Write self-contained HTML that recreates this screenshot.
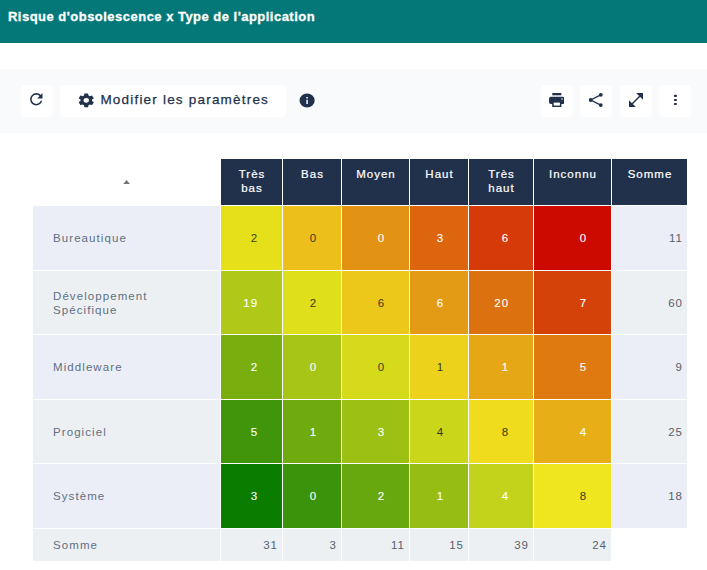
<!DOCTYPE html>
<html lang="fr"><head><meta charset="utf-8"><title>Risque d'obsolescence x Type de l'application</title>
<style>
html,body{margin:0;padding:0;background:#fff}
body{width:707px;height:570px;position:relative;overflow:hidden;font-family:"Liberation Sans",sans-serif;color:#22314b}
.top{position:absolute;left:0;top:0;width:707px;height:43px;background:#047878}
.title{-webkit-text-stroke:0.3px #fff;position:absolute;left:8px;top:9px;line-height:16px;font-size:13px;font-weight:bold;color:#fff;white-space:nowrap;letter-spacing:0.48px}
.bar{position:absolute;left:-1px;top:69px;width:720px;height:63.7px;background:#f9fafb;border-radius:4px 0 0 4px}
.btn{position:absolute;top:85px;height:32px;width:32px;background:#fff;border-radius:4px}
.btn svg{position:absolute;fill:#22314b}
.mod{-webkit-text-stroke:0.25px #22314b;position:absolute;left:100.4px;top:92px;line-height:16px;font-size:13.5px;letter-spacing:1.2px;white-space:nowrap;color:#22314b}
.c{position:absolute;box-sizing:border-box;font-size:11.5px;line-height:14px;white-space:nowrap}
.c span{position:absolute}
.h{color:#fff;text-align:center;letter-spacing:1px;font-size:11.5px;-webkit-text-stroke:0.2px #fff}
.h span{left:1px;right:0;top:8px}
.l{color:#5f6f82;letter-spacing:1.08px}
.l span{left:20px;top:25px}
.l.two span{top:18px}
.v{color:#fff;text-align:right;letter-spacing:1.1px;-webkit-text-stroke:0.1px #fff}
.v.d{color:#3a3a20;-webkit-text-stroke:0}
.v span{right:23.7px;top:25px}
.s{color:#56606b;text-align:right;letter-spacing:1px}
.s span{right:4px;top:25px}
.b span{top:9px}
.tri{position:absolute;left:123px;top:180px;width:0;height:0;border-left:3.5px solid transparent;border-right:3.5px solid transparent;border-bottom:4px solid #777}
</style></head><body>
<div class="top"></div>
<div class="title">Risque d'obsolescence x Type de l'application</div>
<div class="bar"></div>
<div class="btn" style="left:21px"><svg viewBox="0 0 24 24" width="18.6" height="18.6" style="left:6.3px;top:5.2px"><path d="M17.65,6.35C16.2,4.9 14.21,4 12,4A8,8 0 0,0 4,12A8,8 0 0,0 12,20C15.73,20 18.84,17.45 19.73,14H17.65C16.83,16.33 14.61,18 12,18A6,6 0 0,1 6,12A6,6 0 0,1 12,6C13.66,6 15.14,6.69 16.22,7.78L13,11H20V4L17.65,6.35Z"/></svg></div>
<div class="btn" style="left:60px;width:226px"><svg viewBox="0 0 24 24" preserveAspectRatio="none" width="18.5" height="16.6" style="left:17.15px;top:6.7px"><path d="M12,15.5A3.5,3.5 0 0,1 8.5,12A3.5,3.5 0 0,1 12,8.5A3.5,3.5 0 0,1 15.5,12A3.5,3.5 0 0,1 12,15.5M19.43,12.97C19.47,12.65 19.5,12.33 19.5,12C19.5,11.67 19.47,11.34 19.43,11L21.54,9.37C21.73,9.22 21.78,8.95 21.66,8.73L19.66,5.27C19.54,5.05 19.27,4.96 19.05,5.05L16.56,6.05C16.04,5.66 15.5,5.32 14.87,5.07L14.5,2.42C14.46,2.18 14.25,2 14,2H10C9.75,2 9.54,2.18 9.5,2.42L9.13,5.07C8.5,5.32 7.96,5.66 7.44,6.05L4.95,5.05C4.73,4.96 4.46,5.05 4.34,5.27L2.34,8.73C2.21,8.95 2.27,9.22 2.46,9.37L4.57,11C4.53,11.34 4.5,11.67 4.5,12C4.5,12.33 4.53,12.65 4.57,12.97L2.46,14.63C2.27,14.78 2.21,15.05 2.34,15.27L4.34,18.73C4.46,18.95 4.73,19.03 4.95,18.95L7.44,17.94C7.96,18.34 8.5,18.68 9.13,18.93L9.5,21.58C9.54,21.82 9.75,22 10,22H14C14.25,22 14.46,21.82 14.5,21.58L14.87,18.93C15.5,18.67 16.04,18.34 16.56,17.94L19.05,18.95C19.27,19.03 19.54,18.95 19.66,18.73L21.66,15.27C21.78,15.05 21.73,14.78 21.54,14.63L19.43,12.97Z"/></svg></div>
<div class="mod">Modifier les paramètres</div>
<svg viewBox="0 0 24 24" preserveAspectRatio="none" width="18.2" height="17" style="position:absolute;left:297.9px;top:92.1px;fill:#22314b"><path d="M13,9H11V7H13M13,17H11V11H13M12,2A10,10 0 0,0 2,12A10,10 0 0,0 12,22A10,10 0 0,0 22,12A10,10 0 0,0 12,2Z"/></svg>
<div class="btn" style="left:541px"><svg viewBox="0 0 15.4 14" width="15.4" height="14" style="left:7.6px;top:8px"><rect x="3.3" y="0" width="9" height="2.3"/><rect x="0" y="3.7" width="15.4" height="7.3" rx="2"/><rect x="3.2" y="8.2" width="9.2" height="5.8"/><rect x="4.7" y="9.6" width="6.2" height="3" fill="#fff"/><circle cx="13" cy="6" r="0.8" fill="#fff"/></svg></div>
<div class="btn" style="left:580px"><svg viewBox="0 0 32 32" width="32" height="32" style="left:0;top:0"><circle cx="10.7" cy="15" r="1.9"/><circle cx="20.8" cy="9.8" r="1.9"/><circle cx="20.8" cy="20.1" r="1.9"/><path d="M20.8,9.8L10.7,15L20.8,20.1" fill="none" stroke="#22314b" stroke-width="1.4"/></svg></div>
<div class="btn" style="left:620px"><svg viewBox="0 0 14 14" width="14" height="14" style="left:9px;top:8px"><polygon points="7.2,0 14,0 14,6.8"/><polygon points="0,7.2 0,14 6.8,14"/><path d="M3,11L11,3" stroke="#22314b" stroke-width="1.5"/></svg></div>
<div class="btn" style="left:659px"><svg viewBox="0 0 32 32" width="32" height="32" style="left:0;top:0"><rect x="14.9" y="9.8" width="3" height="2.2" rx="0.8"/><rect x="14.9" y="13.9" width="3" height="2.2" rx="0.8"/><rect x="14.9" y="17.9" width="3" height="2.2" rx="0.8"/></svg></div>
<svg viewBox="0 0 7.2 4.3" width="7.2" height="4.3" style="position:absolute;left:122.9px;top:179.8px;fill:#757575"><polygon points="0,4.3 3.6,0 7.2,4.3"/></svg>
<div class="c h" style="left:221px;top:159px;width:61px;height:46px;background:#22314b"><span>Très<br>bas</span></div>
<div class="c h" style="left:283px;top:159px;width:58px;height:46px;background:#22314b"><span>Bas</span></div>
<div class="c h" style="left:342px;top:159px;width:67px;height:46px;background:#22314b"><span>Moyen</span></div>
<div class="c h" style="left:410px;top:159px;width:58px;height:46px;background:#22314b"><span>Haut</span></div>
<div class="c h" style="left:469px;top:159px;width:64px;height:46px;background:#22314b"><span>Très<br>haut</span></div>
<div class="c h" style="left:534px;top:159px;width:77px;height:46px;background:#22314b"><span>Inconnu</span></div>
<div class="c h" style="left:612px;top:159px;width:75px;height:46px;background:#22314b"><span>Somme</span></div>
<div class="c l" style="left:33px;top:206px;width:187px;height:64px;background:#ebeef7"><span>Bureautique</span></div>
<div class="c v d" style="left:221px;top:206px;width:61px;height:64px;background:#e6e01a"><span>2</span></div>
<div class="c v d" style="left:283px;top:206px;width:58px;height:64px;background:#ecbf1a"><span>0</span></div>
<div class="c v" style="left:342px;top:206px;width:67px;height:64px;background:#e39313"><span>0</span></div>
<div class="c v" style="left:410px;top:206px;width:58px;height:64px;background:#dd650e"><span>3</span></div>
<div class="c v" style="left:469px;top:206px;width:64px;height:64px;background:#d53a08"><span>6</span></div>
<div class="c v" style="left:534px;top:206px;width:77px;height:64px;background:#cc0a00"><span>0</span></div>
<div class="c s" style="left:612px;top:206px;width:75px;height:64px;background:#ebeef7"><span>11</span></div>
<div class="c l two" style="left:33px;top:271px;width:187px;height:63px;background:#edf0f3"><span>Développement<br>Spécifique</span></div>
<div class="c v" style="left:221px;top:271px;width:61px;height:63px;background:#b0c918"><span>19</span></div>
<div class="c v d" style="left:283px;top:271px;width:58px;height:63px;background:#dfdf1c"><span>2</span></div>
<div class="c v d" style="left:342px;top:271px;width:67px;height:63px;background:#ecc81b"><span>6</span></div>
<div class="c v" style="left:410px;top:271px;width:58px;height:63px;background:#e39a14"><span>6</span></div>
<div class="c v" style="left:469px;top:271px;width:64px;height:63px;background:#dc720f"><span>20</span></div>
<div class="c v" style="left:534px;top:271px;width:77px;height:63px;background:#d4420a"><span>7</span></div>
<div class="c s" style="left:612px;top:271px;width:75px;height:63px;background:#edf0f3"><span>60</span></div>
<div class="c l" style="left:33px;top:335px;width:187px;height:64px;background:#ebeef7"><span>Middleware</span></div>
<div class="c v" style="left:221px;top:335px;width:61px;height:64px;background:#79ae0f"><span>2</span></div>
<div class="c v" style="left:283px;top:335px;width:58px;height:64px;background:#a6c516"><span>0</span></div>
<div class="c v d" style="left:342px;top:335px;width:67px;height:64px;background:#d5db1b"><span>0</span></div>
<div class="c v d" style="left:410px;top:335px;width:58px;height:64px;background:#edd21c"><span>1</span></div>
<div class="c v" style="left:469px;top:335px;width:64px;height:64px;background:#e6a717"><span>1</span></div>
<div class="c v" style="left:534px;top:335px;width:77px;height:64px;background:#df7a11"><span>5</span></div>
<div class="c s" style="left:612px;top:335px;width:75px;height:64px;background:#ebeef7"><span>9</span></div>
<div class="c l" style="left:33px;top:400px;width:187px;height:63px;background:#edf0f3"><span>Progiciel</span></div>
<div class="c v" style="left:221px;top:400px;width:61px;height:63px;background:#41950b"><span>5</span></div>
<div class="c v" style="left:283px;top:400px;width:58px;height:63px;background:#6fab0e"><span>1</span></div>
<div class="c v" style="left:342px;top:400px;width:67px;height:63px;background:#9cc013"><span>3</span></div>
<div class="c v d" style="left:410px;top:400px;width:58px;height:63px;background:#c9d619"><span>4</span></div>
<div class="c v d" style="left:469px;top:400px;width:64px;height:63px;background:#eedc1d"><span>8</span></div>
<div class="c v" style="left:534px;top:400px;width:77px;height:63px;background:#e7ae18"><span>4</span></div>
<div class="c s" style="left:612px;top:400px;width:75px;height:63px;background:#edf0f3"><span>25</span></div>
<div class="c l" style="left:33px;top:464px;width:187px;height:64px;background:#ebeef7"><span>Système</span></div>
<div class="c v" style="left:221px;top:464px;width:61px;height:64px;background:#0a7c00"><span>3</span></div>
<div class="c v" style="left:283px;top:464px;width:58px;height:64px;background:#3a930a"><span>0</span></div>
<div class="c v" style="left:342px;top:464px;width:67px;height:64px;background:#67a80e"><span>2</span></div>
<div class="c v" style="left:410px;top:464px;width:58px;height:64px;background:#95bd14"><span>1</span></div>
<div class="c v" style="left:469px;top:464px;width:64px;height:64px;background:#c3d21b"><span>4</span></div>
<div class="c v d" style="left:534px;top:464px;width:77px;height:64px;background:#f0e620"><span>8</span></div>
<div class="c s" style="left:612px;top:464px;width:75px;height:64px;background:#ebeef7"><span>18</span></div>
<div class="c l b" style="left:33px;top:529px;width:187px;height:32px;background:#edf0f3"><span>Somme</span></div>
<div class="c s b" style="left:221px;top:529px;width:61px;height:32px;background:#edf0f3"><span>31</span></div>
<div class="c s b" style="left:283px;top:529px;width:58px;height:32px;background:#edf0f3"><span>3</span></div>
<div class="c s b" style="left:342px;top:529px;width:67px;height:32px;background:#edf0f3"><span>11</span></div>
<div class="c s b" style="left:410px;top:529px;width:58px;height:32px;background:#edf0f3"><span>15</span></div>
<div class="c s b" style="left:469px;top:529px;width:64px;height:32px;background:#edf0f3"><span>39</span></div>
<div class="c s b" style="left:534px;top:529px;width:77px;height:32px;background:#edf0f3"><span>24</span></div>
</body></html>
